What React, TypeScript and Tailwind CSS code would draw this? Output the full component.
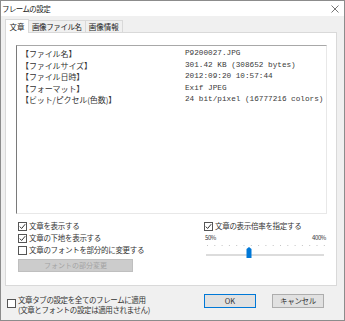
import React from 'react';

const ui = { fontFamily: '"Noto Sans CJK JP", "Noto Sans", sans-serif' };
const mono = { fontFamily: '"Liberation Mono", "Noto Sans CJK JP", monospace' };

const infoRows: [string, string][] = [
  ['【ファイル名】', 'P9200027.JPG'],
  ['【ファイルサイズ】', '301.42 KB (308652 bytes)'],
  ['【ファイル日時】', '2012:09:20 10:57:44'],
  ['【フォーマット】', 'Exif JPEG'],
  ['【ビット/ピクセル(色数)】', '24 bit/pixel (16777216 colors)'],
];

function CheckBox({ checked }: { checked: boolean }) {
  return (
    <svg width="9" height="9" viewBox="0 0 9 9" className="shrink-0">
      <rect x="0.5" y="0.5" width="8" height="8" fill="#fff" stroke="#555" />
      {checked ? (
        <polyline points="1.8,4.6 3.6,6.5 7.2,2.2" fill="none" stroke="#333" strokeWidth="1" />
      ) : null}
    </svg>
  );
}

function Check({ checked, label }: { checked: boolean; label: string }) {
  return (
    <div className="flex h-[12px] items-center gap-[2px]">
      <CheckBox checked={checked} />
      <span className="text-[7.5px] leading-[12px] tracking-[-0.3px] text-[#333]">{label}</span>
    </div>
  );
}

function Slider() {
  const ticks = Array.from({ length: 17 }, (_, i) => i);
  return (
    <svg width="122" height="18" viewBox="0 0 122 18" className="mt-[1px]">
      {ticks.map((i) => (
        <rect key={i} x={3 + i * 7.3} y="2" width="1" height="1" fill="#c4c4c4" />
      ))}
      <rect x="2" y="11" width="118" height="2" fill="#dcdcdc" />
      <path d="M42.5 6 L45 4 L47.5 6 L47.5 15 L42.5 15 Z" fill="#0078d7" />
    </svg>
  );
}

export default function App() {
  return (
    <div
      className="flex h-[321px] w-[345px] flex-col border border-[#8c8c8c] bg-[#f0f0f0]"
      style={ui}
    >
      <div className="flex h-[15px] items-center justify-between bg-white pl-[1px] pr-[5px]">
        <span className="text-[7.5px] leading-[15px] tracking-[-0.6px] text-[#222]">フレームの設定</span>
        <svg width="8" height="8" viewBox="0 0 8 8">
          <path d="M0.5 0.5 L7.5 7.5 M7.5 0.5 L0.5 7.5" stroke="#666" strokeWidth="0.9" />
        </svg>
      </div>

      <div className="ml-[4px] mt-[2px] flex h-[14px] items-end">
        <div className="relative z-10 -mb-px flex h-[14px] w-[24px] items-center justify-center border border-b-0 border-[#d9d9d9] bg-white text-[7.5px] leading-none text-[#222]">
          文章
        </div>
        <div className="flex h-[12px] items-center border-t border-r border-[#d9d9d9] px-[3px] text-[7.5px] leading-none tracking-[-0.4px] text-[#222]">
          画像ファイル名
        </div>
        <div className="flex h-[12px] items-center border-t border-r border-[#d9d9d9] px-[3px] text-[7.5px] leading-none text-[#222]">
          画像情報
        </div>
      </div>

      <div className="ml-[4px] h-[254px] w-[332px] border border-[#d9d9d9] bg-white pl-[10px] pt-[12px]">
        <div className="h-[169px] w-[311px] border-l border-t border-r border-b border-l-[#7a7a7a] border-t-[#a8a8a8] border-r-[#e8e8e8] border-b-[#e8e8e8] pl-[4px] pt-[2px]">
          {infoRows.map(([k, v]) => (
            <div key={k} className="flex h-[11.5px] items-center text-[#333]">
              <span className="w-[164px] text-[8px] leading-[11.5px] tracking-[-0.1px]" style={ui}>
                {k}
              </span>
              <span className="text-[7.7px] leading-[11.5px] text-[#3a3a3a]" style={mono}>
                {v}
              </span>
            </div>
          ))}
        </div>

        <div className="mt-[6px] flex">
          <div className="ml-[2px] flex w-[186px] flex-col">
            <Check checked label="文章を表示する" />
            <Check checked label="文章の下地を表示する" />
            <Check checked={false} label="文章のフォントを部分的に変更する" />
            <div className="mt-[3px] flex h-[13px] w-[115px] items-center justify-center border border-[#bfbfbf] bg-[#cccccc] text-[7px] leading-none text-[#a3a3a3]">
              フォントの部分変更
            </div>
          </div>
          <div className="flex flex-col">
            <Check checked label="文章の表示倍率を指定する" />
            <div className="mt-[2px] flex w-[122px] justify-between pl-[1px] text-[6px] leading-[8px] tracking-[-0.4px] text-[#333]">
              <span>50%</span>
              <span>400%</span>
            </div>
            <Slider />
          </div>
        </div>
      </div>

      <div className="flex items-start pl-[6px] pt-[8px]">
        <div className="mt-[5px]">
          <CheckBox checked={false} />
        </div>
        <div className="ml-[2px] flex w-[186px] flex-col pt-[1px] text-[7.5px] leading-[10px] tracking-[-0.4px] text-[#333]">
          <span>文章タブの設定を全てのフレームに適用</span>
          <span>(文章とフォントの設定は適用されません)</span>
        </div>
        <div className="flex h-[14px] w-[52px] items-center justify-center border border-[#0078d7] bg-[#e1e1e1] text-[7.5px] leading-none text-[#333]">
          OK
        </div>
        <div className="ml-[16px] flex h-[14px] w-[52px] items-center justify-center border border-[#adadad] bg-[#e1e1e1] text-[7.5px] leading-none tracking-[-0.3px] text-[#333]">
          キャンセル
        </div>
      </div>
    </div>
  );
}
